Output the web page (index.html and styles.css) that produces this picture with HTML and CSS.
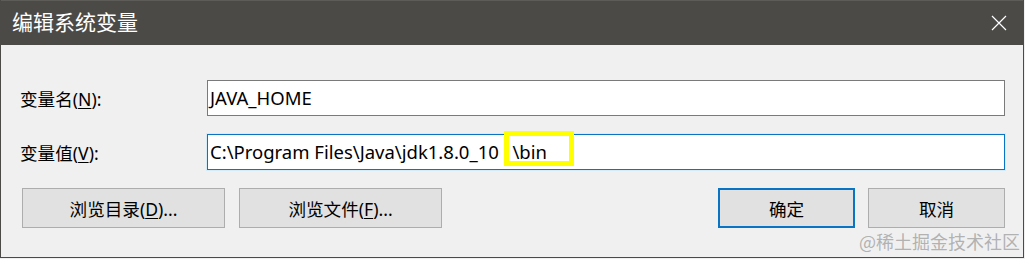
FILE: index.html
```html
<!DOCTYPE html>
<html lang="zh-CN">
  <head>
    <meta charset="UTF-8" />
    <title>编辑系统变量</title>
    <link rel="stylesheet" href="styles.css">
  </head>
  <body>
    <div class="dialog">
      <div class="title-bar">
        <span class="title">编辑系统变量</span>
        <svg class="close" width="16" height="16" viewBox="0 0 16 16">
          <path d="M1 1 L15 15 M15 1 L1 15" stroke="#fff" stroke-width="1.2" fill="none" />
        </svg>
      </div>

      <div class="content">
        <div class="field-row">
          <label class="field-label">变量名(<u>N</u>):</label>
          <div class="field-input">JAVA_HOME</div>
        </div>

        <div class="field-row">
          <label class="field-label">变量值(<u>V</u>):</label>
          <div class="field-input focused">C:\Program Files\Java\jdk1.8.0_10&nbsp;&nbsp;<span class="marked">\bin<span class="highlight-box"></span></span></div>
        </div>

        <div class="button-row">
          <div class="button-group">
            <button class="btn wide">浏览目录(<u>D</u>)...</button>
            <button class="btn wide">浏览文件(<u>F</u>)...</button>
          </div>
          <div class="button-group">
            <button class="btn primary">确定</button>
            <button class="btn">取消</button>
          </div>
        </div>
      </div>

      <div class="watermark">@稀土掘金技术社区</div>
    </div>
  </body>
</html>
```

FILE: styles.css
```css
body {
  margin: 0;
  padding: 0;
  background: #f0f0f0;
  font-family: 'Noto Sans', 'Noto Sans CJK SC', sans-serif;
  color: #000;
}

.dialog {
  position: relative;
  width: 1024px;
  height: 258px;
  box-sizing: border-box;
  border: 1px solid #4c4a47;
  border-top: none;
  background: #f0f0f0;
  overflow: hidden;
}

.title-bar {
  height: 45px;
  background: #4c4a47;
  border-top: 1px solid #5e5c59;
  box-sizing: border-box;
  display: flex;
  align-items: center;
  justify-content: space-between;
  padding: 0 16px 0 11px;
}

.title {
  color: #fff;
  font-size: 21px;
  line-height: 1;
  margin-top: -2px;
}

.close {
  display: block;
  margin-top: -1px;
}

.content {
  padding: 35px 18px 0 19px;
}

.field-row {
  display: flex;
  align-items: center;
  height: 36px;
  margin-bottom: 18px;
}

.field-label {
  width: 187px;
  font-size: 17.6px;
  flex-shrink: 0;
}

.field-label u,
.btn u {
  text-decoration-thickness: 1px;
  text-underline-offset: 2px;
}

.field-input {
  flex-grow: 1;
  height: 36px;
  box-sizing: border-box;
  border: 1px solid #7a7a7a;
  background: #fff;
  padding: 0 2px;
  font-size: 18.5px;
  line-height: 34px;
  white-space: nowrap;
}

.field-input.focused {
  border: 1px solid #0a74c4;
  box-shadow: 0 0 0 1px #d4ecf7;
}

.marked {
  position: relative;
  display: inline-block;
  margin-left: 4px;
}

.highlight-box {
  position: absolute;
  left: -8px;
  top: -4px;
  width: 60px;
  height: 25px;
  border: 5px solid #ffff00;
}

.button-row {
  display: flex;
  justify-content: space-between;
  margin-top: 7px;
}

.button-group {
  display: flex;
  gap: 13px;
}

.button-group:first-child {
  margin-left: 2px;
  gap: 14px;
}

.btn {
  font-family: inherit;
  font-size: 17.6px;
  width: 137px;
  height: 40px;
  box-sizing: border-box;
  background: #e1e1e1;
  border: 1px solid #adadad;
  color: #000;
  padding: 0;
}

.btn.wide {
  width: 203px;
}

.btn.primary {
  border: 2px solid #0a74c4;
}

.watermark {
  position: absolute;
  right: 3px;
  bottom: 3px;
  font-size: 18px;
  font-family: 'Noto Sans CJK SC', serif;
  color: rgba(150, 150, 150, 0.7);
}
```
